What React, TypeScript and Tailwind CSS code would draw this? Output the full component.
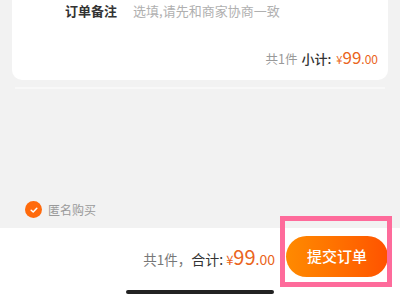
const FONT = { fontFamily: '"Noto Sans CJK SC", "Noto Sans", sans-serif' };

function CheckCircle() {
  return (
    <span className="flex h-[17px] w-[17px] shrink-0 items-center justify-center rounded-full bg-[#ff6a0c]">
      <svg width="10" height="10" viewBox="0 0 10 10" fill="none" aria-hidden>
        <path d="M2.2 5.2 4.2 7 7.8 3.2" stroke="#fff" strokeWidth="1.5" strokeLinecap="round" strokeLinejoin="round" />
      </svg>
    </span>
  );
}

export default function App() {
  return (
    <div className="relative flex h-[300px] w-[400px] flex-col overflow-hidden bg-[#f2f2f2]" style={FONT}>
      {/* 订单卡片（上半部分已滚出视口） */}
      <div className="mx-3 flex h-[80px] flex-col rounded-b-[10px] bg-white px-[10px]">
        <div className="flex items-center gap-4 pl-[43px] pt-[1px] leading-[20px]">
          <span className="text-[13px] font-bold text-[#333]">订单备注</span>
          <span className="text-[13px] text-[#b0b0b0]">选填,请先和商家协商一致</span>
        </div>
        <div className="mt-auto mb-[15px] flex items-baseline justify-end text-[13px] leading-none">
          <span className="text-[12.5px] text-[#999]">共1件</span>
          <span className="ml-[4px] text-[13px] font-medium text-[#333]">小计:</span>
          <span className="ml-[5px] text-[11px] text-[#ea6420]">¥</span>
          <span className="text-[17px] text-[#ea6420]">99</span>
          <span className="text-[12px] text-[#ea6420]">.00</span>
        </div>
      </div>

      <div className="mx-[15px] mt-[7px] h-[2px] bg-[#f8f8f8]" />

      <div className="flex-1" />

      <div className="flex items-center gap-[6px] pl-[25px] pb-[10px]">
        <CheckCircle />
        <span className="text-[12px] leading-none text-[#9a9a9a]">匿名购买</span>
      </div>

      {/* 底部结算栏 */}
      <div className="flex h-[72px] flex-col bg-white">
        <div className="flex items-center justify-end pt-[8px] pr-[12px]">
          <div className="flex items-baseline leading-none">
            <span className="text-[13.5px] text-[#777]">共1件，</span>
            <span className="text-[14px] text-[#333]">合计:</span>
            <span className="ml-[3px] text-[13px] text-[#ea6420]">¥</span>
            <span className="text-[20px] text-[#ea6420]">99</span>
            <span className="text-[14px] text-[#ea6420]">.00</span>
          </div>
          <button className="ml-[11px] flex h-[41px] w-[102px] items-center justify-center rounded-full bg-gradient-to-r from-[#ff8a00] to-[#ff5200] text-[15px] font-medium text-white">
            提交订单
          </button>
        </div>
        <div className="mt-auto mb-[6px] flex justify-center">
          <div className="h-[4px] w-[148px] rounded-full bg-[#222]" />
        </div>
      </div>

      {/* 标注框 */}
      <div className="pointer-events-none absolute left-[280px] top-[216px] h-[71px] w-[112px] border-[5px] border-[#fe6b9b]" />
    </div>
  );
}
